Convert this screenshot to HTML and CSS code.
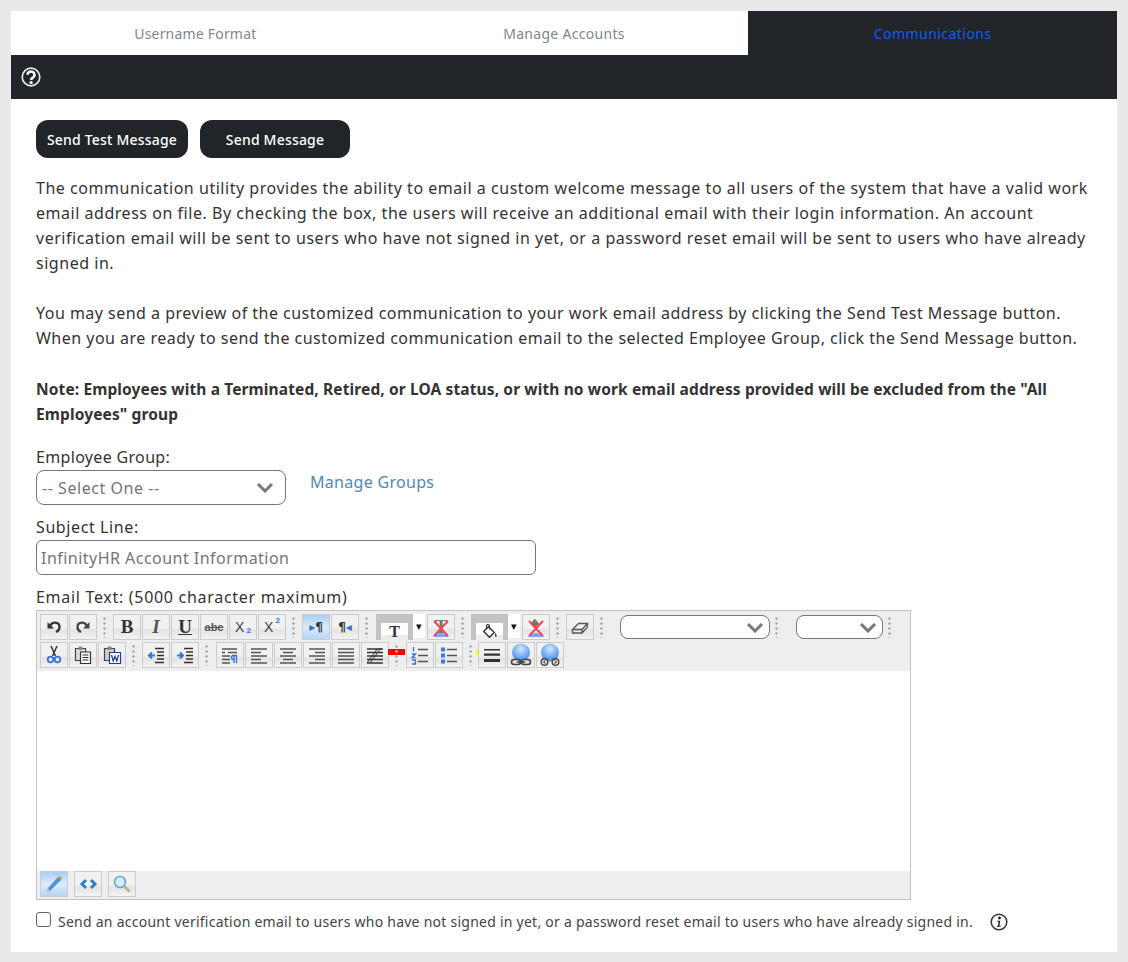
FILE: index.html
```html
<!DOCTYPE html>
<html lang="en">
<head>
<meta charset="utf-8">
<title>Communications</title>
<link rel="stylesheet" href="styles.css">
</head>
<body>
<svg class="defs" width="0" height="0" aria-hidden="true">
  <defs>
    <radialGradient id="gloss" cx=".5" cy=".3" r=".7"><stop offset="0" stop-color="#d5e7fd"/><stop offset=".55" stop-color="#7fb2f4"/><stop offset="1" stop-color="#3f86ea"/></radialGradient>
    <symbol id="x" viewBox="0 0 20 20"><path d="M2 19Q10 11 18 19Z" fill="#7da6ee"/><path d="M3 3 17 18M17 3 3 18" stroke="#f2434b" stroke-width="1.900" fill="none"/></symbol>
    <symbol id="globe" viewBox="0 0 24 24"><circle cx="12" cy="9.500" r="9" fill="url(#gloss)"/></symbol>
  </defs>
</svg>
<main class="panel">
  <nav class="tabs">
    <a class="tab">Username Format</a>
    <a class="tab mid">Manage Accounts</a>
    <a class="tab active">Communications</a>
  </nav>
  <div class="helpbar">
    <svg class="help" viewBox="0 0 20 20" width="20" height="20"><circle cx="10" cy="10" r="8.800" fill="none" stroke="#e6e6e6" stroke-width="1.700"/><path d="M6.500 7.800a3.500 3.300 0 1 1 5.500 2.700c-1.300.8-1.900 1.100-1.900 2.500" fill="none" stroke="#fff" stroke-width="2.600"/><circle cx="10.100" cy="15.500" r="1.600" fill="#fff"/></svg>
  </div>
  <section class="content">
    <div class="actions">
      <button class="btn btn-test">Send Test Message</button>
      <button class="btn btn-send">Send Message</button>
    </div>
    <p class="copy">The communication utility provides the ability to email a custom welcome message to all users of the system that have a valid work email address on file. By checking the box, the users will receive an additional email with their login information. An account verification email will be sent to users who have not signed in yet, or a password reset email will be sent to users who have already signed in.</p>
    <p class="copy gap">You may send a preview of the customized communication to your work email address by clicking the Send Test Message button. When you are ready to send the customized communication email to the selected Employee Group, click the Send Message button.</p>
    <p class="copy note">Note: Employees with a Terminated, Retired, or LOA status, or with no work email address provided will be excluded from the "All Employees" group</p>

    <label class="label first">Employee Group:</label>
    <div class="group-row">
      <div class="select sel-group"><span class="ph sel-ph">-- Select One --</span><svg class="chev" viewBox="0 0 18 11" width="18" height="11"><path d="M2 2 9 9 16 2" fill="none" stroke="#777" stroke-width="3"/></svg></div>
      <a class="link">Manage Groups</a>
    </div>
    <label class="label second">Subject Line:</label>
    <div class="input"><span class="ph subj-ph">InfinityHR Account Information</span></div>
    <label class="label third">Email Text: (5000 character maximum)</label>

    <div class="editor">
      <div class="toolbar">
        <div class="row">
          <span class="b"><svg viewBox="0 0 20 20"><path d="M6.500 8.500C8 4.500 15 4.500 15.500 9.500 15.700 12 14 14 12 15" fill="none" stroke="#333" stroke-width="2.300"/><path d="M3.500 5v6.500H10z" fill="#333"/></svg></span>
          <span class="b"><svg viewBox="0 0 20 20"><path d="M13.500 8.500C12 4.500 5 4.500 4.500 9.500 4.300 12 6 14 8 15" fill="none" stroke="#444" stroke-width="2.300"/><path d="M16.500 5v6.500H10z" fill="#444"/></svg></span>
          <i class="s"></i>
          <span class="b"><b class="serif">B</b></span>
          <span class="b"><em class="serif it">I</em></span>
          <span class="b"><u class="serif und">U</u></span>
          <span class="b"><s class="abc">abc</s></span>
          <span class="b"><span class="xs">X<sub>2</sub></span></span>
          <span class="b"><span class="xs">X<sup>2</sup></span></span>
          <i class="s"></i>
          <span class="b on"><span class="pil"><span class="blue">▸</span>¶</span></span>
          <span class="b"><span class="pil">¶<span class="blue">◂</span></span></span>
          <i class="s s16"></i>
          <span class="swatch"><span class="chip"><b class="serif chip-t">T</b></span></span><span class="drop">▾</span>
          <span class="b"><b class="serif faint">T</b><svg class="over" viewBox="0 0 20 20"><use href="#x"/></svg></span>
          <i class="s"></i>
          <span class="swatch"><span class="chip"><svg class="bucket" viewBox="0 0 16 16"><path d="M2.500 8 7 3.500 12.500 9 8 13.500z" fill="#fff" stroke="#333" stroke-width="1.300"/><path d="M5 5.500V3a1.500 1.500 0 0 1 3 0v3" fill="none" stroke="#333"/><path d="M13.500 9c1 2 1.800 3 1 4s-2-1-1-4" fill="#444"/></svg></span></span><span class="drop">▾</span>
          <span class="b"><svg class="mini" viewBox="0 0 16 16"><path d="M3 8 7 3l5 5-5 5z" fill="#777"/></svg><svg class="over" viewBox="0 0 20 20"><use href="#x"/></svg></span>
          <i class="s"></i>
          <span class="b"><svg viewBox="0 0 20 20"><path d="M2.500 12.500 8.500 6.500h9l-5.500 6zM2.500 12.500v3.500h9.500l5.500-6v-3.500M12 12.500v3.500" fill="none" stroke="#555" stroke-width="1.300"/></svg></span>
          <i class="s wide"></i>
          <span class="select mini-sel w150"><svg class="chev" viewBox="0 0 18 11" width="18" height="11"><path d="M2 2 9 9 16 2" fill="none" stroke="#777" stroke-width="3"/></svg></span>
          <i class="s wide"></i>
          <span class="select mini-sel w87"><svg class="chev" viewBox="0 0 18 11" width="18" height="11"><path d="M2 2 9 9 16 2" fill="none" stroke="#777" stroke-width="3"/></svg></span>
          <i class="s"></i>
        </div>
        <div class="row">
          <span class="b"><svg viewBox="0 0 20 20"><path d="M7 1 11.500 11M13 1 8.500 11" stroke="#333" stroke-width="1.500"/><circle cx="6.500" cy="14.500" r="2.800" fill="none" stroke="#3a6fe0" stroke-width="1.700"/><circle cx="13.500" cy="14.500" r="2.800" fill="none" stroke="#3a6fe0" stroke-width="1.700"/></svg></span>
          <span class="b"><svg viewBox="0 0 20 20"><path d="M2.500 3.500h10v12h-10z" fill="#ddd" stroke="#444" stroke-width="1.200"/><path d="M5.500 1.500h4v3.500h-4z" fill="#888"/><path d="M7.500 7h10v11.500h-10z" fill="#fff" stroke="#333" stroke-width="1.200"/><path d="M9.500 10h6M9.500 12.500h6M9.500 15h6" stroke="#333"/></svg></span>
          <span class="b"><svg viewBox="0 0 20 20"><path d="M2.500 3.500h10v12h-10z" fill="#ccc" stroke="#444" stroke-width="1.200"/><path d="M5.500 1.500h4v3.500h-4z" fill="#888"/><path d="M7.500 7.500h11v11h-11z" fill="#fff" stroke="#1c3f8f" stroke-width="1.200"/><path d="M9.500 10l1.700 6 1.800-4.500 1.800 4.500 1.700-6" fill="none" stroke="#1c3f8f" stroke-width="1.300"/></svg></span>
          <i class="s"></i>
          <span class="b"><svg viewBox="0 0 20 20"><path d="M9 3.500h9M11 7h7M11 10.500h7M11 14h7M9 17.500h9" stroke="#333" stroke-width="1.500"/><path d="M9 10.500H3M6 7.500l-3 3 3 3" fill="none" stroke="#3a6fe0" stroke-width="2"/></svg></span>
          <span class="b"><svg viewBox="0 0 20 20"><path d="M9 3.500h9M11 7h7M11 10.500h7M11 14h7M9 17.500h9" stroke="#333" stroke-width="1.500"/><path d="M2 10.500h6M5 7.500l3 3-3 3" fill="none" stroke="#3a6fe0" stroke-width="2"/></svg></span>
          <i class="s s16"></i>
          <span class="b"><svg viewBox="0 0 20 20"><path d="M2 4h15M8 7.500h9M2 7.500h3M2 11h8M2 14.500h8M2 18h8" stroke="#555" stroke-width="1.500"/><path d="M12 10.500h5M13.500 10.500a2 2 0 0 0 0 4M14 10.500V18M16.500 10.500V18" stroke="#3a6fe0" stroke-width="1.400" fill="none"/></svg></span>
          <span class="b"><svg viewBox="0 0 20 20"><path d="M2 4h16M2 7.500h10M2 11h16M2 14.500h10M2 18h16" stroke="#555" stroke-width="1.500"/></svg></span>
          <span class="b"><svg viewBox="0 0 20 20"><path d="M2 4h16M5 7.500h10M2 11h16M5 14.500h10M2 18h16" stroke="#555" stroke-width="1.500"/></svg></span>
          <span class="b"><svg viewBox="0 0 20 20"><path d="M2 4h16M8 7.500h10M2 11h16M8 14.500h10M2 18h16" stroke="#555" stroke-width="1.500"/></svg></span>
          <span class="b"><svg viewBox="0 0 20 20"><path d="M2 4h16M2 7.500h16M2 11h16M2 14.500h16M2 18h16" stroke="#555" stroke-width="1.500"/></svg></span>
          <span class="b"><svg viewBox="0 0 20 20"><path d="M2 4h16M2 7.500h16M2 11h16M2 14.500h16M2 18h16" stroke="#333" stroke-width="1.500"/><path d="M16 3 5 18M13 3 2 18" stroke="#333"/></svg></span>
          <span class="redgap"><i class="redbar"></i><i class="s inline"></i></span>
          <span class="b"><svg viewBox="0 0 20 20"><path d="M8 4.500h10M8 10.500h10M8 16.500h10" stroke="#555" stroke-width="1.600"/><path d="M3.500 2v4.500M2 9h3.500L2 12.500h3.500M2 15h3.500v4H2" stroke="#3a6fe0" stroke-width="1.300" fill="none"/></svg></span>
          <span class="b"><svg viewBox="0 0 20 20"><path d="M8 4.500h10M8 10.500h10M8 16.500h10" stroke="#555" stroke-width="1.600"/><path d="M2 2.500h4v4H2zM2 8.500h4v4H2zM2 14.500h4v4H2z" fill="#3f78ee"/></svg></span>
          <i class="s s14"></i>
          <i class="ybar"></i>
          <span class="b"><svg viewBox="0 0 20 20"><path d="M2 4h16v1.500H2zM2 8.500h16v2.300H2zM2 14h16v3H2z" fill="#333"/></svg></span>
          <span class="b"><svg class="big" viewBox="0 0 24 24"><use href="#globe"/><rect x="2.500" y="16.500" width="9" height="5" rx="2.500" fill="#ddd" stroke="#444" stroke-width="1.600"/><rect x="12.500" y="16.500" width="9" height="5" rx="2.500" fill="#ddd" stroke="#444" stroke-width="1.600"/><path d="M8 19h8" stroke="#444" stroke-width="1.600"/></svg></span>
          <span class="b"><svg class="big" viewBox="0 0 24 24"><use href="#globe"/><circle cx="6.500" cy="19" r="3.300" fill="#ddd" stroke="#444" stroke-width="1.400"/><circle cx="17.500" cy="19" r="3.300" fill="#ddd" stroke="#444" stroke-width="1.400"/><path d="M7.500 17.500 5.500 19l2 1.500M16.500 17.500 18.500 19l-2 1.500" fill="none" stroke="#333"/></svg></span>
        </div>
      </div>
      <div class="area"></div>
      <div class="modes">
        <span class="b on"><svg viewBox="0 0 20 20"><path d="M4 14 14 3l3 3L6 17l-3 1z" fill="#4d93d6"/><path d="M14 3l3 3 1-2-2-2z" fill="#c78d43"/><path d="M4 14l2 3-3 1z" fill="#e2c069"/></svg></span>
        <span class="b"><svg viewBox="0 0 20 20"><path d="M8 6 4 10l4 4M13 6l4 4-4 4" fill="none" stroke="#2f7fc6" stroke-width="3"/></svg></span>
        <span class="b"><svg viewBox="0 0 20 20"><circle cx="8" cy="8" r="5.500" fill="#d3ecf8" stroke="#6aa6cf" stroke-width="1.600"/><path d="M12.500 12.500l5 5" stroke="#b9b37d" stroke-width="2.800"/></svg></span>
      </div>
    </div>
    <div class="consent">
      <span class="check"></span>
      <span class="consent-text">Send an account verification email to users who have not signed in yet, or a password reset email to users who have already signed in.</span>
      <svg class="info" viewBox="0 0 18 18" width="18" height="18"><circle cx="9" cy="9" r="7.800" fill="#fff" stroke="#333" stroke-width="1.500"/><circle cx="9.500" cy="5" r="1.400" fill="#222"/><path d="M7.300 7.700h3l-.9 5h1.200v1H6.900v-1h1l.7-4H7.300z" fill="#222"/></svg>
    </div>
  </section>
</main>
</body>
</html>
```
FILE: styles.css
```css
* { box-sizing: border-box; }
html, body { margin: 0; height: 100%; }
body {
  background: #e9e9e9;
  padding: 11px 11px 10px;
  font-family: "Noto Sans", "Liberation Sans", sans-serif;
  font-size: 16px;
  color: #333;
  overflow: hidden;
}
.defs { position: absolute; }
.panel { background: #fff; height: 941px; display: flex; flex-direction: column; }
.tabs { display: flex; height: 44px; }
.tab {
  flex: 1;
  display: flex;
  align-items: center;
  justify-content: center;
  font-size: 14px;
  letter-spacing: .2px;
  color: #7d8790;
}
.tab.mid { letter-spacing: .3px; }
.tab.active { background: #212529; color: #0d5ef5; letter-spacing: .45px; }
.helpbar { height: 44px; background: #212529; display: flex; align-items: center; padding-left: 10px; }
.content { padding: 21px 25px 0; }
.actions { display: flex; gap: 12px; }
.btn {
  height: 38px;
  border: 0;
  border-radius: 12px;
  background: #212529;
  color: #fff;
  font: inherit;
  font-size: 14px;
  font-weight: 500;
  letter-spacing: .2px;
  padding: 0;
}
.btn-test { width: 152px; }
.btn-send { width: 150px; }
.copy { margin: 0; line-height: 25px; letter-spacing: .53px; }
.actions + .copy { margin-top: 18px; }
.copy.gap { margin-top: 25px; letter-spacing: .48px; }
.copy.note { margin-top: 26px; font-weight: 700; font-size: 15.500px; letter-spacing: .12px; }
.label { display: block; line-height: 22px; letter-spacing: .33px; }
.label.first { margin-top: 19px; margin-bottom: 2px; }
.label.second { margin-top: 11px; margin-bottom: 2px; letter-spacing: .6px; }
.label.third { margin-top: 11px; margin-bottom: 2px; letter-spacing: .7px; }
.group-row { display: flex; align-items: flex-start; gap: 24px; }
.select {
  display: flex;
  align-items: center;
  justify-content: space-between;
  background: #fff;
  border: 1px solid #777;
  border-radius: 8px;
}
.sel-group { width: 250px; height: 35px; padding: 0 11px 0 5px; }
.ph { color: #757575; }
.sel-ph { letter-spacing: .55px; }
.subj-ph { letter-spacing: .47px; }
.link { color: #4f89b8; line-height: 25px; letter-spacing: .3px; }
.input { width: 500px; height: 35px; border: 1px solid #777; border-radius: 6px; padding: 0 4px; display: flex; align-items: center; }
.editor { width: 875px; height: 290px; border: 1px solid #c4c4c4; background: #fff; display: flex; flex-direction: column; }
.toolbar { background: #eee; padding: 3px 0 0 3px; height: 60px; }
.row { display: flex; align-items: flex-start; height: 28px; }
.b {
  position: relative;
  width: 28px;
  height: 26px;
  margin-right: 1px;
  flex: none;
  display: flex;
  align-items: center;
  justify-content: center;
  border: 1px solid #ccc;
  background: linear-gradient(#f1f1f1 0 55%, #e3e3e3 62%, #f3f3f3 100%);
}
.b svg { width: 20px; height: 20px; }
.b svg.big { width: 24px; height: 24px; }
.b .over { position: absolute; left: 3px; top: 3px; }
.b.on { background: linear-gradient(#a8cdf5, #dcebfb 50%, #b6d5f7); }
.s {
  flex: none;
  width: 15px;
  height: 22px;
  margin-top: 2px;
  background: radial-gradient(circle, #b0b0b0 1.100px, transparent 1.500px) 5px 0 / 3px 5px repeat-y;
}
.s16 { width: 16px; }
.s14 { width: 14px; }
.s.wide { width: 25px; }
.s.wide + .w87 { margin-left: 1px; }
.s.inline { position: absolute; left: 2px; top: 0; width: 15px; }
.serif { font-family: "Liberation Serif", serif; font-size: 19px; color: #333; }
.it { font-style: italic; font-weight: 700; color: #555; }
.und { font-weight: 700; }
.abc { font-family: "Liberation Sans", sans-serif; font-size: 11px; font-weight: 700; color: #555; }
.xs { font-family: "Liberation Sans", sans-serif; font-size: 14px; color: #444; display: inline-flex; }
.xs sub, .xs sup { font-size: 8px; font-weight: 700; color: #3a6fe0; line-height: 1; margin-left: 2px; vertical-align: baseline; }
.xs sub { margin-top: 8px; }
.xs sup { margin-top: -2px; }
.pil { font-family: "DejaVu Sans", sans-serif; font-size: 12px; font-weight: 700; color: #333; }
.blue { color: #2f6fd6; }
.faint { color: #777; }
.mini { position: absolute; left: 5px; top: 1px; width: 15px !important; height: 15px !important; }
.swatch { flex: none; width: 37px; height: 26px; background: #c3c3c3; padding: 9px 5px 0; }
.chip { display: flex; justify-content: center; height: 17px; background: linear-gradient(#fff 70%, #ececec 70%); }
.chip-t { font-size: 16px; line-height: 17px; }
.bucket { width: 17px !important; height: 17px; }
.drop {
  flex: none;
  width: 12px;
  height: 24px;
  margin: 0 2px 0 0;
  background: #fff;
  font-size: 11px;
  line-height: 24px;
  text-align: center;
  color: #111;
}
.mini-sel { height: 24px; margin-top: 1px; padding: 0 5px 0 0; justify-content: flex-end; flex: none; }
.w150 { width: 150px; }
.w87 { width: 87px; }
.redgap { position: relative; width: 18px; margin-left: -2px; flex: none; height: 28px; }
.redbar { position: absolute; left: 0; top: 7px; width: 17px; height: 6px; background: #f00; }
.ybar { flex: none; width: 2px; height: 6px; margin: 7px 0 0 -2px; background: #ff0; }
.area { flex: 1; }
.modes { height: 28px; background: #eee; display: flex; gap: 4px; padding: 0 0 0 3px; align-items: flex-start; }
.modes .b { height: 26px; }
.modes .b + .b { margin-left: 1px; }
.consent { display: flex; align-items: center; margin-top: 12px; }
.check { width: 15px; height: 15px; border: 1px solid #666; border-radius: 3px; flex: none; margin-right: 7px; margin-top: -5px; }
.consent-text { font-size: 14px; letter-spacing: .25px; color: #444; white-space: nowrap; }
.info { margin-left: 17px; flex: none; }
```
